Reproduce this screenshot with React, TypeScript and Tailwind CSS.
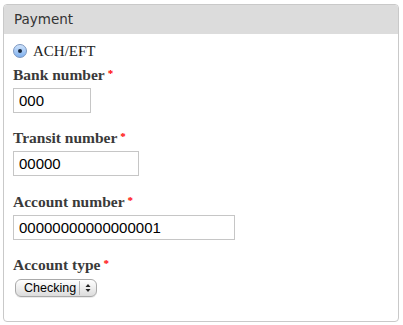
const serif = "font-['Liberation_Serif','DejaVu_Serif',serif]";
const sans = "font-['Liberation_Sans',Arial,sans-serif]";

function FieldLabel({ text }: { text: string }) {
  return (
    <div className={`${serif} h-[18px] text-[15.5px] leading-[18px] font-bold text-[#3a3a3a] mb-[4px]`}>
      {text}
      <span className="ml-[3px] relative -top-[3px] text-[11px] text-[#ff0000]">*</span>
    </div>
  );
}

function TextInput({ value, width }: { value: string; width: string }) {
  return (
    <input
      type="text"
      defaultValue={value}
      className={`${sans} ${width} block h-[25px] border border-[#c6c6c6] bg-white px-[5px] text-[15px] text-black outline-none`}
    />
  );
}

export default function App() {
  return (
    <div className="bg-white w-[403px] h-[325px] pt-[4px] pl-[3px]">
      <div className="w-[396px] h-[318px] border border-[#c9c9c9] rounded-[4px] overflow-hidden">
        <div className="h-[29px] bg-[#dcdcdc] pl-[10px] flex items-center font-['DejaVu_Sans',sans-serif] text-[13.5px] text-[#333]">
          Payment
        </div>
        <div className="px-[9px] pt-[10px]">
          <label className="flex items-center gap-[6px] h-[14px] mb-[8px]">
            <span className="w-[14px] h-[14px] rounded-full border border-[#7a96c0] bg-gradient-to-b from-[#cfe3fb] to-[#7fb0ee] flex items-center justify-center">
              <span className="w-[4px] h-[4px] rounded-full bg-[#1a2a40]" />
            </span>
            <span className={`${serif} text-[15px] leading-[14px] text-[#222]`}>ACH/EFT</span>
          </label>

          <FieldLabel text="Bank number" />
          <TextInput value="000" width="w-[78px]" />

          <div className="mt-[16px]">
            <FieldLabel text="Transit number" />
            <TextInput value="00000" width="w-[126px]" />
          </div>

          <div className="mt-[17px]">
            <FieldLabel text="Account number" />
            <TextInput value="00000000000000001" width="w-[222px]" />
          </div>

          <div className="mt-[16px]">
            <FieldLabel text="Account type" />
            <div className="ml-[2px] mt-[5px] w-[82px] h-[18px] rounded-[6px] border border-[#a9a9a9] bg-gradient-to-b from-white to-[#dcdcdc] flex items-center shadow-[0_1px_0_rgba(0,0,0,0.08)]">
              <span className={`${sans} flex-1 pl-[8px] text-[12.5px] leading-[16px] text-black`}>Checking</span>
              <span className="w-px h-[14px] bg-[#b5b5b5]" />
              <svg width="16" height="16" viewBox="0 0 16 16" className="shrink-0">
                <path d="M5.5 7 L8 4 L10.5 7 Z" fill="#222" />
                <path d="M5.5 9 L8 12 L10.5 9 Z" fill="#222" />
              </svg>
            </div>
          </div>
        </div>
      </div>
    </div>
  );
}
